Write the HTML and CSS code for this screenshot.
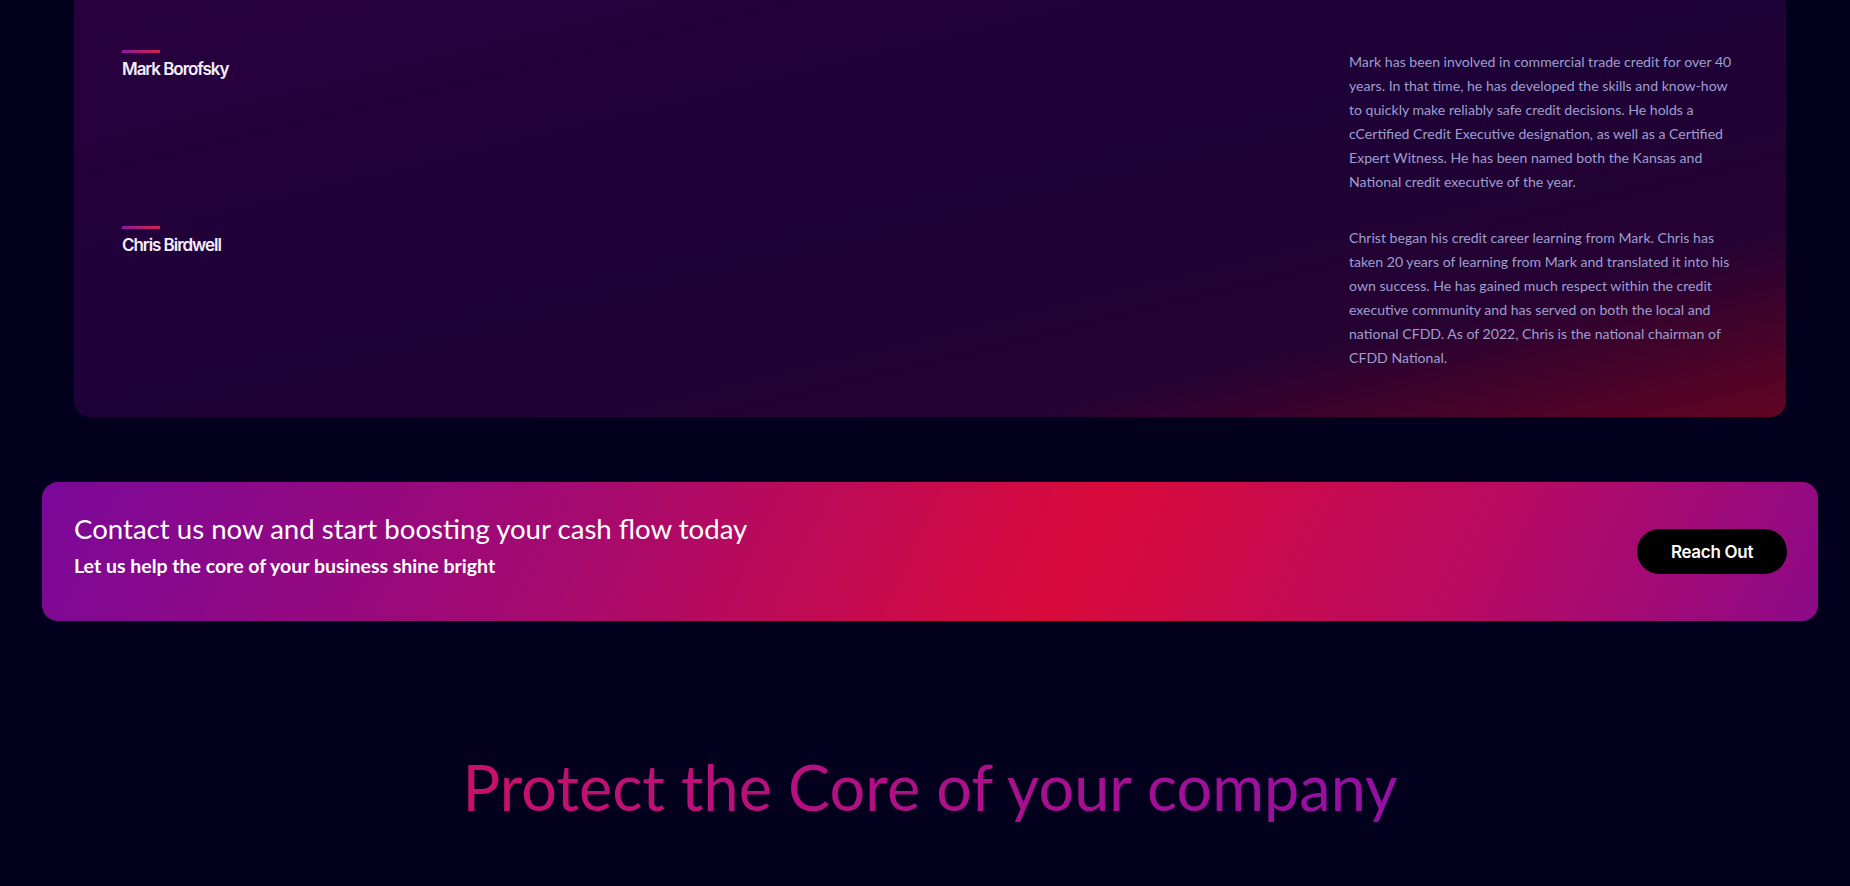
FILE: index.html
```html
<!DOCTYPE html>
<html lang="en">
<head>
<meta charset="utf-8">
<title>About</title>
<link rel="stylesheet" href="styles.css">
</head>
<body>
<div class="page">
  <section class="team">
    <div class="member">
      <div class="member-name">
        <span class="bar"></span>
        <h3>Mark Borofsky</h3>
      </div>
      <p class="bio">Mark has been involved in commercial trade credit for over 40 years. In that time, he has developed the skills and know-how to quickly make reliably safe credit decisions. He holds a cCertified Credit Executive designation, as well as a Certified Expert Witness. He has been named both the Kansas and National credit executive of the year.</p>
    </div>
    <div class="member">
      <div class="member-name">
        <span class="bar"></span>
        <h3>Chris Birdwell</h3>
      </div>
      <p class="bio">Christ began his credit career learning from Mark. Chris has taken 20 years of learning from Mark and translated it into his own success. He has gained much respect within the credit executive community and has served on both the local and national CFDD. As of 2022, Chris is the national chairman of CFDD National.</p>
    </div>
  </section>

  <section class="cta">
    <div class="cta-text">
      <h2>Contact us now and start boosting your cash flow today</h2>
      <p>Let us help the core of your business shine bright</p>
    </div>
    <a class="cta-btn" href="#">Reach Out</a>
  </section>

  <section class="protect">
    <h2 class="protect-title">Protect the Core of your company</h2>
  </section>
</div>
</body>
</html>
```
FILE: styles.css
```css
html, body {
  margin: 0;
  padding: 0;
}

body {
  background: #03001e;
  font-family: "Lato", "Open Sans", sans-serif;
  color: #ffffff;
  overflow: hidden;
}

.page {
  width: 1776px;
  margin-left: 42px;
}

.team {
  margin: 0 32px;
  padding: 50px 48px 47px;
  border-radius: 0 0 16px 16px;
  background: linear-gradient(to bottom right, #29003f 0%, #1e0136 50%, #260232 78%, #620422 100%);
  display: flex;
  flex-direction: column;
  gap: 32px;
}

.member {
  display: flex;
  justify-content: space-between;
  align-items: flex-start;
}

.bar {
  display: block;
  width: 38px;
  height: 3px;
  background: linear-gradient(90deg, #8c1a9e, #d61f4e);
  margin-bottom: 5px;
}

.member-name h3 {
  margin: 0;
  font-family: "Inter", "Roboto", sans-serif;
  font-weight: 600;
  font-size: 17px;
  line-height: 22px;
  letter-spacing: -1.05px;
  color: #f3eefa;
}

.bio {
  margin: 0;
  width: 389px;
  font-size: 14.1px;
  line-height: 24px;
  color: #9d9fd0;
}

.cta {
  margin-top: 65px;
  height: 139px;
  box-sizing: border-box;
  padding: 0 31px 0 32px;
  border-radius: 16px;
  background: linear-gradient(115deg, #7a0899 0%, #a50a70 30%, #d90a3b 58%, #b80a62 80%, #8d0a88 100%);
  display: flex;
  align-items: center;
  justify-content: space-between;
}

.cta-text {
  align-self: flex-start;
  padding-top: 31px;
}

.cta-text h2 {
  margin: 0;
  font-size: 27.6px;
  font-weight: 400;
  line-height: 32px;
  color: #ffffff;
}

.cta-text p {
  margin: 9px 0 0;
  font-size: 19.5px;
  font-weight: 700;
  line-height: 24px;
  color: #ffffff;
}

.cta-btn {
  width: 150px;
  height: 45px;
  border-radius: 23px;
  background: #000000;
  color: #ffffff;
  text-decoration: none;
  font-family: "Inter", "Roboto", sans-serif;
  font-weight: 600;
  font-size: 17px;
  letter-spacing: -0.3px;
  display: flex;
  align-items: center;
  justify-content: center;
}

.protect {
  padding-top: 130px;
  text-align: center;
}

.protect-title {
  display: inline-block;
  margin: 0;
  font-size: 63px;
  font-weight: 400;
  line-height: 72px;
  background: linear-gradient(90deg, #c8106a 0%, #9410a4 100%);
  -webkit-background-clip: text;
  background-clip: text;
  color: transparent;
}
```
